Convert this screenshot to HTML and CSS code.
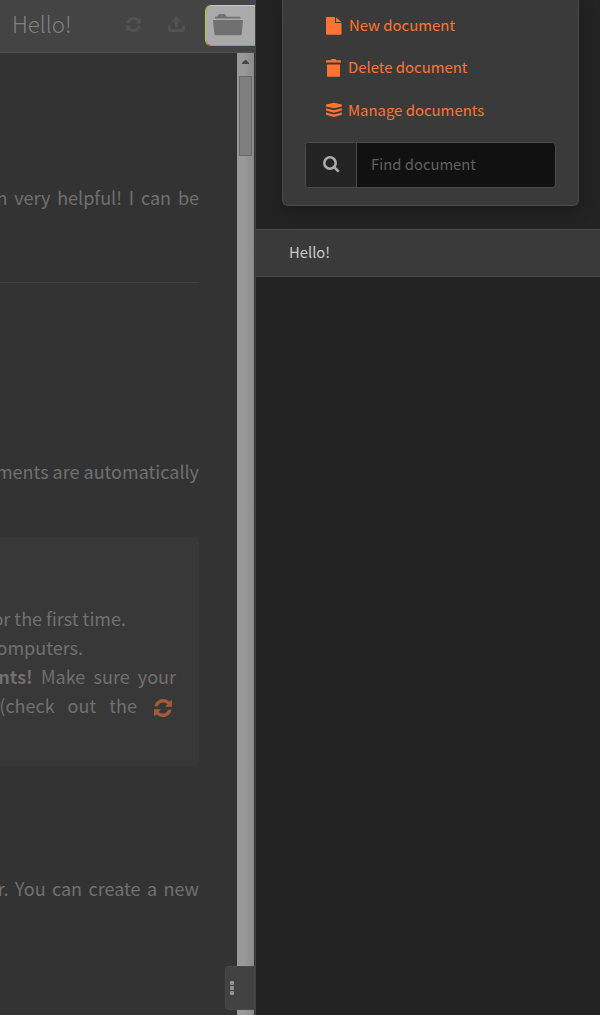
FILE: index.html
```html
<!DOCTYPE html>
<html lang="en">
<head>
<meta charset="utf-8">
<title>Hello!</title>
<link rel="stylesheet" href="styles.css">
</head>
<body>
<svg class="defs" width="0" height="0">
  <symbol id="refresh" viewBox="0 0 18 18">
    <path d="M.4 7.300C1.300 3 4.700 0 9 0c2.500 0 4.700 1 6.300 2.500L18 .8v7h-6.800l2.200-2.700C12.200 4 10.700 3.400 9 3.400 6.500 3.400 4.700 4.900 3.900 7.300zM17.600 10.700C16.700 15 13.300 18 9 18c-2.500 0-4.700-1-6.300-2.500L0 17.200v-7h6.800l-2.200 2.700C5.800 14 7.300 14.600 9 14.600c2.500 0 4.300-1.500 5.100-3.900z"/>
  </symbol>
</svg>
<div class="app">
  <main class="editor">
    <header class="navbar">
      <div class="title">Hello!</div>
      <svg class="sync" viewBox="0 0 18 18"><use href="#refresh"/></svg>
      <svg class="share" viewBox="0 0 18 17"><path d="M9 0l5.200 5.800h-3.500v6H7.300v-6H3.800zM0 10h3v3.200c0 .5.300.8.800.8h10.400c.5 0 .8-.3.800-.8V10h3v4c0 1.700-1.300 3-3 3H3c-1.700 0-3-1.300-3-3z"/></svg>
      <div class="folder">
        <svg viewBox="0 0 30 22"><path d="M2 4.500V3.500c0-.7.400-1 1-1h1.200L5.500.7C5.900.2 6.300 0 7 0h4c.7 0 1.100.2 1.500.7l1.300 2H26.500c.7 0 1 .3 1 1v.8zM.8 6h28.400c.6 0 .8.300.8.900l-1.300 13c-.1.800-.6 1.300-1.400 1.300H2.800c-.8 0-1.300-.5-1.400-1.300L0 6.900C0 6.300.2 6 .8 6z"/></svg>
      </div>
    </header>
    <div class="body">
      <article class="preview">
        <p class="line intro">m very helpful! I can be</p>
        <hr class="rule">
        <p class="line auto">ments are automatically</p>
        <section class="note">
          <p class="line first">or the first time.</p>
          <p class="line comp">omputers.</p>
          <p class="line sure"><b>nts!</b> Make sure your</p>
          <p class="line check">(check out the <svg viewBox="0 0 18 18"><use href="#refresh"/></svg></p>
        </section>
        <p class="line create">r. You can create a new</p>
      </article>
      <div class="scrollbar">
        <svg viewBox="0 0 7 4"><path d="M0 4V3L3 0h1l3 3v1z"/></svg>
        <div class="thumb"></div>
      </div>
    </div>
    <div class="more"><i></i><i></i><i></i></div>
  </main>
  <aside class="panel">
    <div class="card">
      <a class="action new"><svg viewBox="0 0 16 18"><path d="M0 1.200C0 .4.400 0 1.200 0H9v6h6.500v10.600c0 .8-.4 1.200-1.200 1.200H1.200c-.8 0-1.200-.4-1.200-1.200zM10 .2L15.300 5H10z"/></svg><span>New document</span></a>
      <a class="action delete"><svg viewBox="0 0 16 18"><path d="M.8 1.200H5L5.500 0h4l.5 1.200h4.200c.5 0 .8.300.8.800v1.600H0V2c0-.5.300-.8.800-.8zM1 5.500h13v11.300c0 .6-.4 1-1 1H2c-.6 0-1-.4-1-1z"/></svg><span>Delete document</span></a>
      <a class="action manage"><svg viewBox="0 0 16 18"><path d="M7.900 1.700L15.800 3.500v1.900L7.900 7.300 0 5.400V3.500zM0 7.200l7.900 2.100 7.900-2.100v2.400l-7.900 2.200L0 9.600zM0 11.400l7.900 2.100 7.900-2.100v2.400L7.900 16 0 13.800z"/></svg><span>Manage documents</span></a>
      <div class="search">
        <div class="addon"><svg viewBox="0 0 17 17"><circle cx="7" cy="7" r="5.700"/><path d="M11 11l4.700 4.700"/></svg></div>
        <div class="field">Find document</div>
      </div>
    </div>
    <div class="item">Hello!</div>
  </aside>
</div>
</body>
</html>
```

FILE: styles.css
```css
* { box-sizing: border-box; }
body { margin: 0; background: #222; font-family: "Noto Sans CJK SC", "Noto Sans", sans-serif; }
.defs { position: absolute; }
.app { display: flex; width: 600px; height: 1015px; overflow: hidden; }
.editor { position: relative; display: flex; flex-direction: column; width: 255px; background: #333; overflow: hidden; }
.navbar { display: flex; align-items: flex-start; height: 53px; flex: none; background: #444; border-bottom: 1px solid #505050; fill: #525252; }
.title { width: 126px; padding-left: 12px; color: #808080; font-size: 22.3px; font-weight: 300; line-height: 47px; }
.sync { width: 15px; height: 15px; margin-top: 17px; }
.share { width: 17px; height: 16px; margin: 16px 0 0 27px; }
.folder { width: 50px; height: 41px; margin: 5px 0 0 20px; padding: 8px 0 0 7px; border: 1px solid; border-color: #e5d51d transparent #df8427 #b3c92a; border-right: 0; border-radius: 6px 0 0 6px; background: #aaa; background-clip: padding-box; fill: #707070; }
.folder svg { display: block; width: 30px; height: 22px; }
.body { display: flex; flex: 1; }
.preview { width: 237px; padding: 130px 38px 0 0; overflow: hidden; }
.line { display: flex; justify-content: flex-end; height: 29px; margin: 0; color: #707070; font-size: 18px; line-height: 29px; white-space: pre; }
.line b { font-weight: 700; }
.rule { height: 1px; margin: 70px 0 174px; border: 0; background: #404040; }
.note { height: 229px; margin: 51px 0 108px; padding: 67px 23px 0 0; border-radius: 0 5px 5px 0; background: #383838; }
.intro { word-spacing: 2.8px; }
.first { padding-right: 50px; }
.comp { padding-right: 93px; }
.sure { word-spacing: 4.2px; }
.check { align-items: center; padding-right: 4px; word-spacing: 9px; }
.check svg { flex: none; width: 18px; height: 18px; margin: 4px 0 0 4px; fill: #a45a36; }
.create { word-spacing: 2.4px; }
.scrollbar { display: flex; flex-direction: column; align-items: center; width: 17px; padding-top: 7px; background: linear-gradient(90deg, #999 40%, #8b8b8b); }
.scrollbar svg { width: 7px; height: 4px; fill: #444; }
.thumb { width: 13px; height: 80px; margin-top: 12px; border: 1px solid #686868; background: #7e7e7e; }
.more { position: absolute; left: 225px; top: 966px; display: flex; flex-direction: column; gap: 1px; width: 30px; height: 44px; padding: 14px 0 0 4px; border: 1px solid #484848; border-radius: 4px 0 0 4px; background: #424242; }
.more i { width: 4px; height: 4px; border-radius: 1px; background: #929292; }
.panel { width: 345px; border-left: 1px solid #424242; background: #232323; }
.card { width: 297px; height: 206px; margin-left: 26px; padding: 4px 22px 0 22px; border: 1px solid #4b4b4b; border-top: 0; border-radius: 0 0 6px 6px; background: #3a3a3a; box-shadow: 0 5px 16px rgba(0,0,0,.25); }
.action { display: flex; align-items: center; height: 42.5px; padding-left: 21px; color: #ff7433; fill: #ff7433; font-size: 14.9px; line-height: 20px; }
.action svg { width: 16px; height: 18px; margin-top: 1px; }
.action span { margin-left: 6px; }
.action.new span { margin-left: 7px; }
.action.delete svg, .action.manage svg { margin-top: 0; }
.action.delete span { margin-bottom: 2px; }
.search { display: flex; height: 46px; margin-top: 10px; border: 1px solid #4b4b4b; border-radius: 4px; background: #111; overflow: hidden; }
.addon { display: flex; align-items: center; justify-content: center; width: 51px; border-right: 1px solid #4b4b4b; background: #232323; }
.addon svg { width: 17px; height: 17px; fill: none; stroke: #aaa; stroke-width: 2.6; }
.field { padding-left: 14px; color: #606060; font-size: 14.8px; line-height: 42px; }
.item { height: 48px; margin-top: 23px; padding-left: 33px; border: 1px solid #4b4b4b; border-width: 1px 0; background: #3a3a3a; color: #c8c8c8; font-size: 14.8px; line-height: 44px; }
```
